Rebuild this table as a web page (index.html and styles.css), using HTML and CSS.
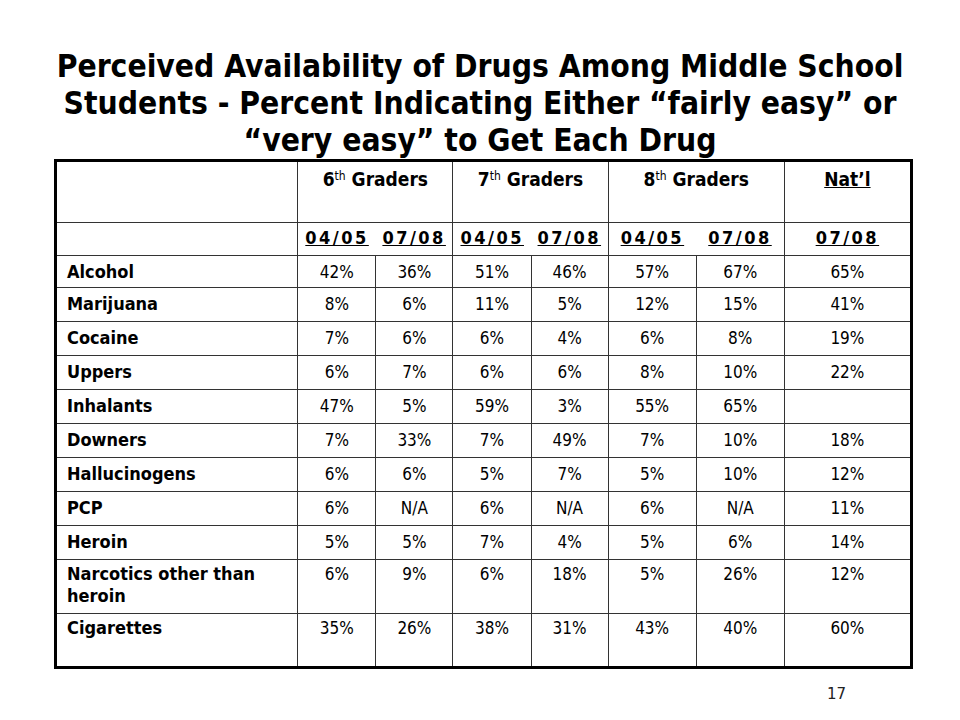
FILE: index.html
```html
<!DOCTYPE html>
<html>
<head>
<meta charset="utf-8">
<title>Perceived Availability of Drugs</title>
<link rel="stylesheet" href="styles.css">
</head>
<body>
<div class="slide">
  <h1 class="title">Perceived Availability of Drugs Among Middle School<br>Students - Percent Indicating Either “fairly easy” or<br>“very easy” to Get Each Drug</h1>
  <table class="grid">
    <colgroup>
      <col class="c-label">
      <col class="c-a"><col class="c-b">
      <col class="c-a"><col class="c-b">
      <col class="c-c"><col class="c-c">
      <col class="c-nat">
    </colgroup>
    <tr class="head1">
      <th></th>
      <th colspan="2">6<sup>th</sup> Graders</th>
      <th colspan="2">7<sup>th</sup> Graders</th>
      <th colspan="2">8<sup>th</sup> Graders</th>
      <th><u>Nat’l</u></th>
    </tr>
    <tr class="head2">
      <th></th>
      <th class="pl"><u>04/05</u></th><th><u>07/08</u></th>
      <th class="pl"><u>04/05</u></th><th><u>07/08</u></th>
      <th class="pl"><u>04/05</u></th><th><u>07/08</u></th>
      <th><u>07/08</u></th>
    </tr>
    <tr class="r1"><th>Alcohol</th><td>42%</td><td>36%</td><td>51%</td><td>46%</td><td>57%</td><td>67%</td><td>65%</td></tr>
    <tr><th>Marijuana</th><td>8%</td><td>6%</td><td>11%</td><td>5%</td><td>12%</td><td>15%</td><td>41%</td></tr>
    <tr><th>Cocaine</th><td>7%</td><td>6%</td><td>6%</td><td>4%</td><td>6%</td><td>8%</td><td>19%</td></tr>
    <tr><th>Uppers</th><td>6%</td><td>7%</td><td>6%</td><td>6%</td><td>8%</td><td>10%</td><td>22%</td></tr>
    <tr><th>Inhalants</th><td>47%</td><td>5%</td><td>59%</td><td>3%</td><td>55%</td><td>65%</td><td></td></tr>
    <tr><th>Downers</th><td>7%</td><td>33%</td><td>7%</td><td>49%</td><td>7%</td><td>10%</td><td>18%</td></tr>
    <tr><th>Hallucinogens</th><td>6%</td><td>6%</td><td>5%</td><td>7%</td><td>5%</td><td>10%</td><td>12%</td></tr>
    <tr><th>PCP</th><td>6%</td><td>N/A</td><td>6%</td><td>N/A</td><td>6%</td><td>N/A</td><td>11%</td></tr>
    <tr><th>Heroin</th><td>5%</td><td>5%</td><td>7%</td><td>4%</td><td>5%</td><td>6%</td><td>14%</td></tr>
    <tr class="tall"><th>Narcotics other than heroin</th><td>6%</td><td>9%</td><td>6%</td><td>18%</td><td>5%</td><td>26%</td><td>12%</td></tr>
    <tr class="tall"><th>Cigarettes</th><td>35%</td><td>26%</td><td>38%</td><td>31%</td><td>43%</td><td>40%</td><td>60%</td></tr>
  </table>
  <div class="page-num">17</div>
</div>
</body>
</html>
```

FILE: styles.css
```css
html, body {
  margin: 0;
  padding: 0;
  background: #ffffff;
}

.slide {
  width: 960px;
  height: 720px;
  font-family: "DejaVu Sans Condensed", "DejaVu Sans", sans-serif;
  color: #000;
}

.title {
  margin: 0;
  padding-top: 48px;
  font-size: 31.5px;
  line-height: 37px;
  font-weight: bold;
  text-align: center;
  height: 111px;
  box-sizing: content-box;
}

.grid {
  margin-left: 54px;
  width: 859px;
  border-collapse: collapse;
  table-layout: fixed;
  border: 3px solid #000;
  font-size: 17px;
  line-height: 20px;
}

.c-label { width: 242px; }
.c-a { width: 78px; }
.c-b { width: 77px; }
.c-c { width: 88px; }
.c-nat { width: 127px; }

.grid th,
.grid td {
  border: 1px solid #333;
  padding: 6px 0 0 0;
  vertical-align: top;
}

.grid td {
  text-align: center;
  font-weight: normal;
}

.grid tr > th:first-child {
  text-align: left;
  padding-left: 10px;
  font-size: 18px;
}

.head1 th {
  padding-top: 7px;
  text-align: center;
  font-weight: bold;
  font-size: 19px;
}

.head1 sup {
  font-size: 12px;
  font-weight: normal;
  vertical-align: 6px;
  line-height: 0;
}

.head2 th {
  padding-top: 5px;
  text-align: center;
  font-size: 18px;
  letter-spacing: 2.5px;
}

.head2 th.pl {
  border-right: hidden;
}

.grid tr {
  height: 34px;
}

.grid tr.head1 {
  height: 62px;
}

.grid tr.head2 {
  height: 33px;
}

.grid tr.r1 {
  height: 32px;
}

.grid tr.tall {
  height: 54px;
}

.grid tr.tall th,
.grid tr.tall td {
  line-height: 22px;
  padding-top: 3px;
}

.page-num {
  padding: 16px 0 0 827px;
  font-family: "DejaVu Sans", sans-serif;
  font-size: 15px;
  color: #222;
}
```
